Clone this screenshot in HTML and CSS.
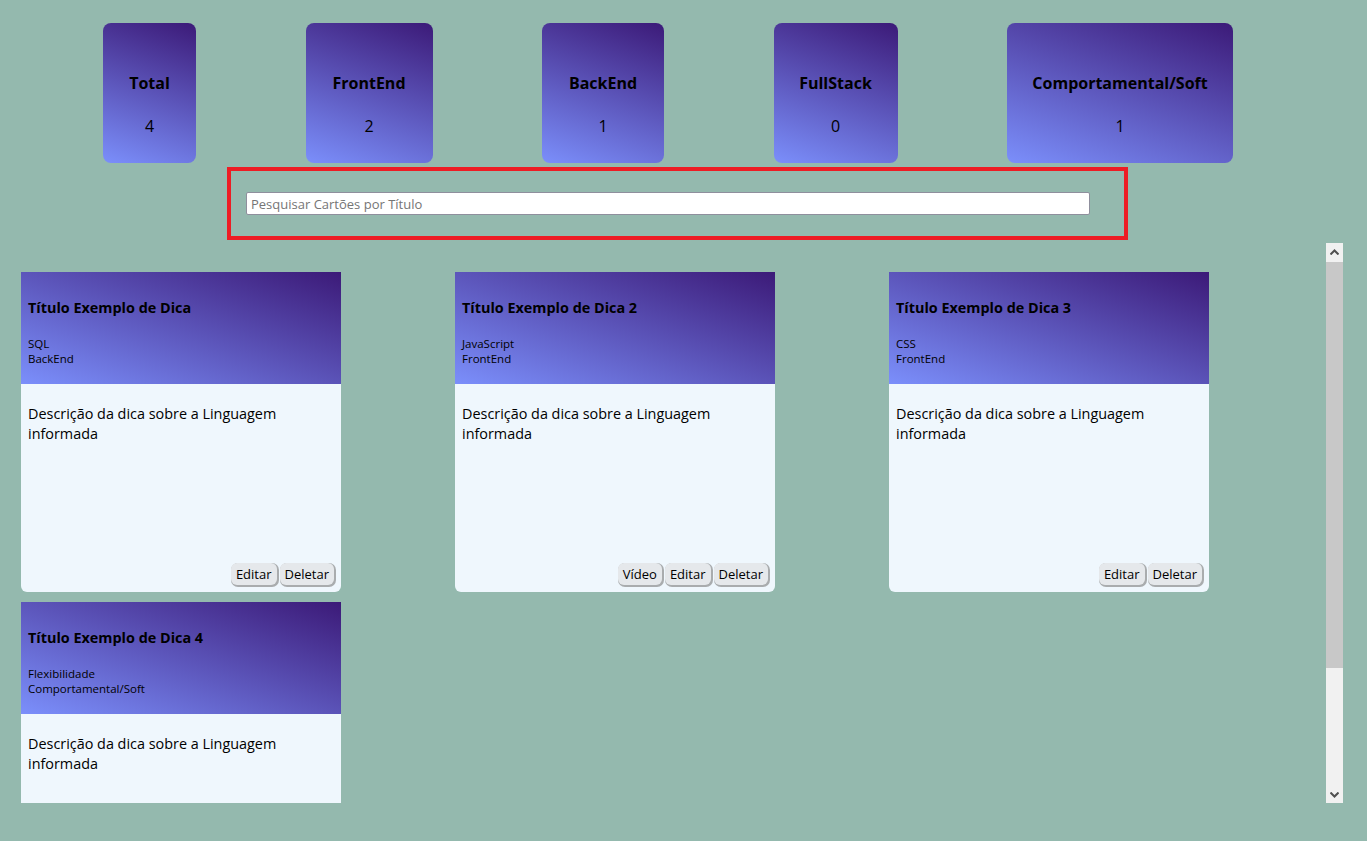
FILE: index.html
```html
<!DOCTYPE html>
<html lang="pt-BR">
<head>
<meta charset="utf-8">
<title>Dicas</title>
<link rel="stylesheet" href="styles.css">
</head>
<body>
  <section class="stats">
    <div class="stat stat-total"><h2>Total</h2><p>4</p></div>
    <div class="stat stat-front"><h2>FrontEnd</h2><p>2</p></div>
    <div class="stat stat-back"><h2>BackEnd</h2><p>1</p></div>
    <div class="stat stat-full"><h2>FullStack</h2><p>0</p></div>
    <div class="stat stat-soft"><h2>Comportamental/Soft</h2><p>1</p></div>
  </section>

  <section class="search">
    <input type="text" class="search-input" placeholder="Pesquisar Cartões por Título">
  </section>

  <div class="cards-wrap">
    <section class="cards">
      <article class="card">
        <header class="card-head">
          <h3>Título Exemplo de Dica</h3>
          <div class="tags"><span>SQL</span><span>BackEnd</span></div>
        </header>
        <div class="card-body">
          <p>Descrição da dica sobre a Linguagem informada</p>
          <div class="actions"><button>Editar</button><button>Deletar</button></div>
        </div>
      </article>
      <article class="card">
        <header class="card-head">
          <h3>Título Exemplo de Dica 2</h3>
          <div class="tags"><span>JavaScript</span><span>FrontEnd</span></div>
        </header>
        <div class="card-body">
          <p>Descrição da dica sobre a Linguagem informada</p>
          <div class="actions"><button>Vídeo</button><button>Editar</button><button>Deletar</button></div>
        </div>
      </article>
      <article class="card">
        <header class="card-head">
          <h3>Título Exemplo de Dica 3</h3>
          <div class="tags"><span>CSS</span><span>FrontEnd</span></div>
        </header>
        <div class="card-body">
          <p>Descrição da dica sobre a Linguagem informada</p>
          <div class="actions"><button>Editar</button><button>Deletar</button></div>
        </div>
      </article>
      <article class="card">
        <header class="card-head">
          <h3>Título Exemplo de Dica 4</h3>
          <div class="tags"><span>Flexibilidade</span><span>Comportamental/Soft</span></div>
        </header>
        <div class="card-body">
          <p>Descrição da dica sobre a Linguagem informada</p>
          <div class="actions"><button>Editar</button><button>Deletar</button></div>
        </div>
      </article>
    </section>
    <div class="scrollbar" aria-hidden="true">
      <div class="sb-btn">
        <svg width="9" height="6" viewBox="0 0 9 6"><path d="M0.5 5.5 L4.5 1.5 L8.5 5.5" fill="none" stroke="#505050" stroke-width="2"/></svg>
      </div>
      <div class="sb-thumb"></div>
      <div class="sb-track"></div>
      <div class="sb-btn">
        <svg width="9" height="6" viewBox="0 0 9 6"><path d="M0.5 0.5 L4.5 4.5 L8.5 0.5" fill="none" stroke="#505050" stroke-width="2"/></svg>
      </div>
    </div>
  </div>
</body>
</html>
```

FILE: styles.css
```css
* { box-sizing: border-box; }

html, body {
  margin: 0;
  height: 100%;
}

body {
  background: #94b9ae;
  font-family: "Open Sans", "Noto Sans", sans-serif;
  color: #000;
  overflow: hidden;
}

.stats {
  display: flex;
  gap: 109.5px;
  padding: 23px 0 0 103px;
}

.stat {
  flex: none;
  height: 140px;
  padding: 48px 0 0;
  border-radius: 8px;
  background: linear-gradient(20deg, #7b8ffb, #3c1a78);
  text-align: center;
  white-space: nowrap;
}

.stat-total { width: 93px; }
.stat-front { width: 127px; }
.stat-back { width: 122px; }
.stat-full { width: 124px; }
.stat-soft { width: 226px; }

.stat h2 {
  margin: 0;
  font-size: 16px;
  line-height: 24px;
  font-weight: 700;
}

.stat p {
  margin: 21px 0 0;
  font-size: 16px;
  line-height: 20px;
}

.search {
  margin: 4px 0 0 227px;
  width: 901px;
  height: 73px;
  border: 4px solid #ed1c24;
  padding: 21px 15px;
}

.search-input {
  display: block;
  width: 844px;
  height: 23px;
  margin: 0;
  border: 1px solid #8f8f9d;
  border-radius: 2px;
  background: #fff;
  padding: 0 4px;
  font-family: "Open Sans", "Noto Sans", sans-serif;
  font-size: 13px;
}

.search-input::placeholder { color: #757575; }

.cards-wrap {
  position: relative;
  margin: 3px 24px 0 0;
  height: 560px;
}

.cards {
  height: 100%;
  overflow: hidden;
  display: flex;
  flex-wrap: wrap;
  align-content: flex-start;
  column-gap: 114px;
  row-gap: 10px;
  padding: 29px 17px 0 21px;
}

.scrollbar {
  position: absolute;
  top: 0;
  right: 0;
  bottom: 0;
  width: 17px;
  display: flex;
  flex-direction: column;
  background: #f1f1f1;
}

.sb-btn {
  height: 17px;
  flex: none;
  display: flex;
  align-items: center;
  justify-content: center;
  background: #f1f1f1;
}

.sb-btn svg { display: block; }

.sb-thumb {
  height: 406px;
  flex: none;
  margin: 2px 0 0;
  background: #c8c8c8;
}

.sb-track { flex: 1; }

.card {
  width: 320px;
  height: 320px;
  display: flex;
  flex-direction: column;
  border-radius: 0 0 6px 6px;
  overflow: hidden;
}

.card-head {
  height: 112px;
  padding: 26px 7px 0;
  background: linear-gradient(20deg, #7b8ffb, #3c1a78);
}

.card-head h3 {
  margin: 0;
  font-size: 14.4px;
  line-height: 20px;
  font-weight: 700;
}

.tags {
  margin-top: 18px;
  display: flex;
  flex-direction: column;
  font-size: 11.5px;
  line-height: 15px;
}

.card-body {
  flex: 1;
  background: #eff7fd;
  padding: 20px 7px 7px;
  display: flex;
  flex-direction: column;
}

.card-body p {
  margin: 0;
  font-size: 14.4px;
  line-height: 20px;
}

.actions {
  margin-top: auto;
  display: flex;
  justify-content: flex-end;
  gap: 3px;
}

.actions button {
  height: 22px;
  padding: 0 5px;
  border: none;
  border-radius: 6px;
  background: #e5e8eb;
  box-shadow: 1px 1px 0 1px #a9acae;
  font-family: "Open Sans", "Noto Sans", sans-serif;
  font-size: 13px;
  color: #000;
  line-height: 22px;
}
```
